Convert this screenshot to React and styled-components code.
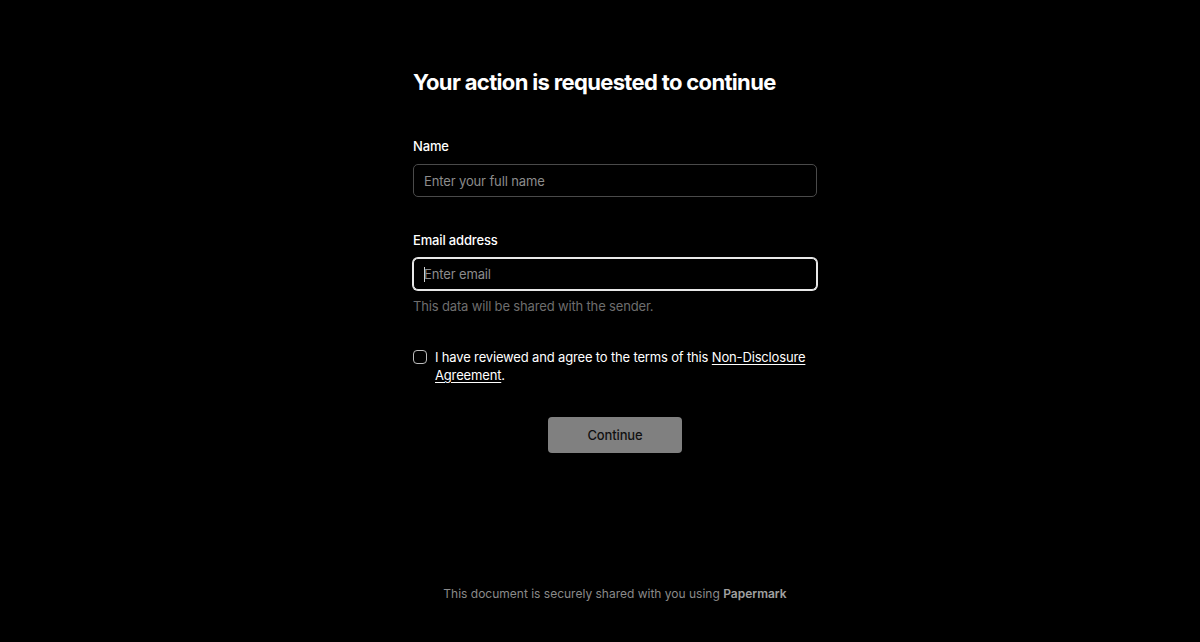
import React from 'react';
import styled, { createGlobalStyle } from 'styled-components';

const GlobalStyle = createGlobalStyle`
  html, body {
    margin: 0;
    padding: 0;
    background: #000;
    font-family: Inter, "Noto Sans", sans-serif;
    -webkit-font-smoothing: antialiased;
  }
  * { box-sizing: border-box; }
`;

const Page = styled.div`
  min-height: 642px;
  padding-left: 30px;
  display: flex;
  flex-direction: column;
  align-items: center;
  background: #000;
  color: #fff;
`;

const Form = styled.form`
  width: 404px;
  padding-top: 68px;
  display: flex;
  flex-direction: column;
  letter-spacing: -0.01em;
`;

const Title = styled.h1`
  margin: 0 0 40px;
  font-size: 22px;
  line-height: 28px;
  font-weight: 700;
  letter-spacing: -0.03em;
  color: #fff;
`;

const Field = styled.div`
  display: flex;
  flex-direction: column;
  margin-bottom: ${({ $gap }) => $gap || 0}px;
`;

const Label = styled.label`
  font-size: 13px;
  line-height: 20px;
  font-weight: 500;
  color: #fff;
  margin-bottom: 8px;
`;

const InputWrap = styled.div`
  position: relative;
`;

const Input = styled.input`
  width: 100%;
  height: ${({ $focused }) => ($focused ? 32 : 33)}px;
  padding: 0 10px;
  background: #000;
  color: #fff;
  font-family: inherit;
  font-size: 13px;
  letter-spacing: -0.01em;
  border-radius: 5px;
  border: 1px solid #4a4a4a;
  outline: none;
  box-shadow: ${({ $focused }) => ($focused ? '0 0 0 1px #e8e8e8' : 'none')};
  border-color: ${({ $focused }) => ($focused ? '#e8e8e8' : '#4a4a4a')};

  &::placeholder {
    color: #8c8c8c;
  }
`;

const Caret = styled.span`
  position: absolute;
  left: 11px;
  top: 9px;
  width: 1px;
  height: 15px;
  background: #d0d0d0;
`;

const Help = styled.p`
  margin: 6px 0 0;
  font-size: 13px;
  line-height: 20px;
  color: #6e6e6e;
`;

const CheckRow = styled.div`
  margin-top: 32px;
  display: flex;
  align-items: flex-start;
  gap: 8px;
`;

const Box = styled.span`
  flex: none;
  width: 14px;
  height: 14px;
  margin-top: 2px;
  border: 1px solid #bdbdbd;
  border-radius: 4px;
`;

const CheckText = styled.span`
  font-size: 13px;
  line-height: 18px;
  color: #fff;

  a {
    color: #fff;
    text-decoration: underline;
    text-underline-offset: 2px;
  }
`;

const Button = styled.button`
  align-self: center;
  margin-top: 33px;
  width: 134px;
  height: 36px;
  border: none;
  border-radius: 4px;
  background: #808080;
  color: #111;
  font-family: inherit;
  font-size: 13px;
  font-weight: 500;
  letter-spacing: -0.01em;
`;

const Footer = styled.footer`
  margin-top: auto;
  padding-bottom: 38px;
  font-size: 12px;
  line-height: 20px;
  color: #8a8a8a;

  b {
    font-weight: 600;
    color: #a0a0a0;
  }
`;

export default function App() {
  return (
    <>
      <GlobalStyle />
      <Page>
        <Form onSubmit={(e) => e.preventDefault()}>
          <Title>Your action is requested to continue</Title>
          <Field $gap={33}>
            <Label>Name</Label>
            <Input placeholder="Enter your full name" />
          </Field>
          <Field>
            <Label>Email address</Label>
            <InputWrap>
              <Input $focused placeholder="Enter email" />
              <Caret />
            </InputWrap>
            <Help>This data will be shared with the sender.</Help>
          </Field>
          <CheckRow>
            <Box />
            <CheckText>
              I have reviewed and agree to the terms of this{' '}
              <a href="#nda">Non-Disclosure Agreement</a>.
            </CheckText>
          </CheckRow>
          <Button type="button">Continue</Button>
        </Form>
        <Footer>
          This document is securely shared with you using <b>Papermark</b>
        </Footer>
      </Page>
    </>
  );
}
